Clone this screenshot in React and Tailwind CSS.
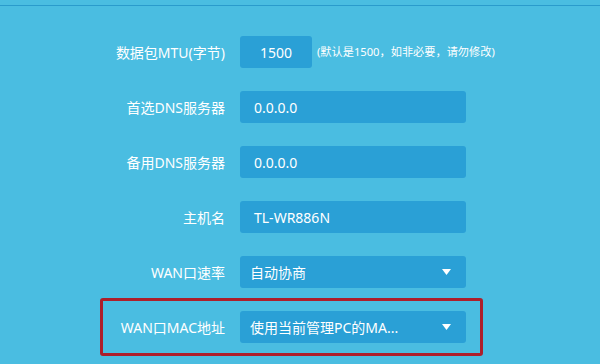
import React from 'react';

function Field({ children, className = '' }) {
  return (
    <div className={`h-[32px] rounded-[3px] bg-[#2aa0d6] text-white text-[14px] flex items-center ${className}`}>
      {children}
    </div>
  );
}

function Arrow() {
  return (
    <svg width="9" height="6" viewBox="0 0 9 6" className="ml-auto mr-[15px]">
      <path d="M0 0 H9 L4.5 6 Z" fill="#ffffff" />
    </svg>
  );
}

function Row({ label, children }) {
  return (
    <div className="flex items-center">
      <div className="w-[122px] text-right text-white text-[14px] whitespace-nowrap">{label}</div>
      <div className="ml-[15px] flex items-center">{children}</div>
    </div>
  );
}

export default function App() {
  return (
    <div className="w-[600px] h-[364px] overflow-hidden bg-[#4abde1] font-['Noto_Sans','Noto_Sans_CJK_SC',sans-serif]">
      {/* top rule */}
      <div className="pt-[5px]">
        <div className="h-[1px] bg-[#2a9bcc]" />
      </div>

      <div className="pt-[30px] pl-[103px] flex flex-col gap-[23px]">
        <Row label="数据包MTU(字节)">
          <Field className="w-[72px] justify-center">1500</Field>
          <span className="ml-[5px] text-[11.2px] text-white whitespace-nowrap">(默认是1500，如非必要，请勿修改)</span>
        </Row>
        <Row label="首选DNS服务器">
          <Field className="w-[226px] pl-[14px]">0.0.0.0</Field>
        </Row>
        <Row label="备用DNS服务器">
          <Field className="w-[226px] pl-[14px]">0.0.0.0</Field>
        </Row>
        <Row label="主机名">
          <Field className="w-[226px] pl-[14px]">TL-WR886N</Field>
        </Row>
        <Row label="WAN口速率">
          <Field className="w-[226px] pl-[10px]">
            <span>自动协商</span>
            <Arrow />
          </Field>
        </Row>
      </div>

      {/* highlighted row */}
      <div className="mt-[10px] ml-[100px] w-[383px] border-[3px] border-[#ad1f2b] rounded-[3px] pt-[10px] pb-[10px]">
        <Row label="WAN口MAC地址">
          <Field className="w-[226px] pl-[10px]">
            <span>使用当前管理PC的MA...</span>
            <Arrow />
          </Field>
        </Row>
      </div>
    </div>
  );
}
